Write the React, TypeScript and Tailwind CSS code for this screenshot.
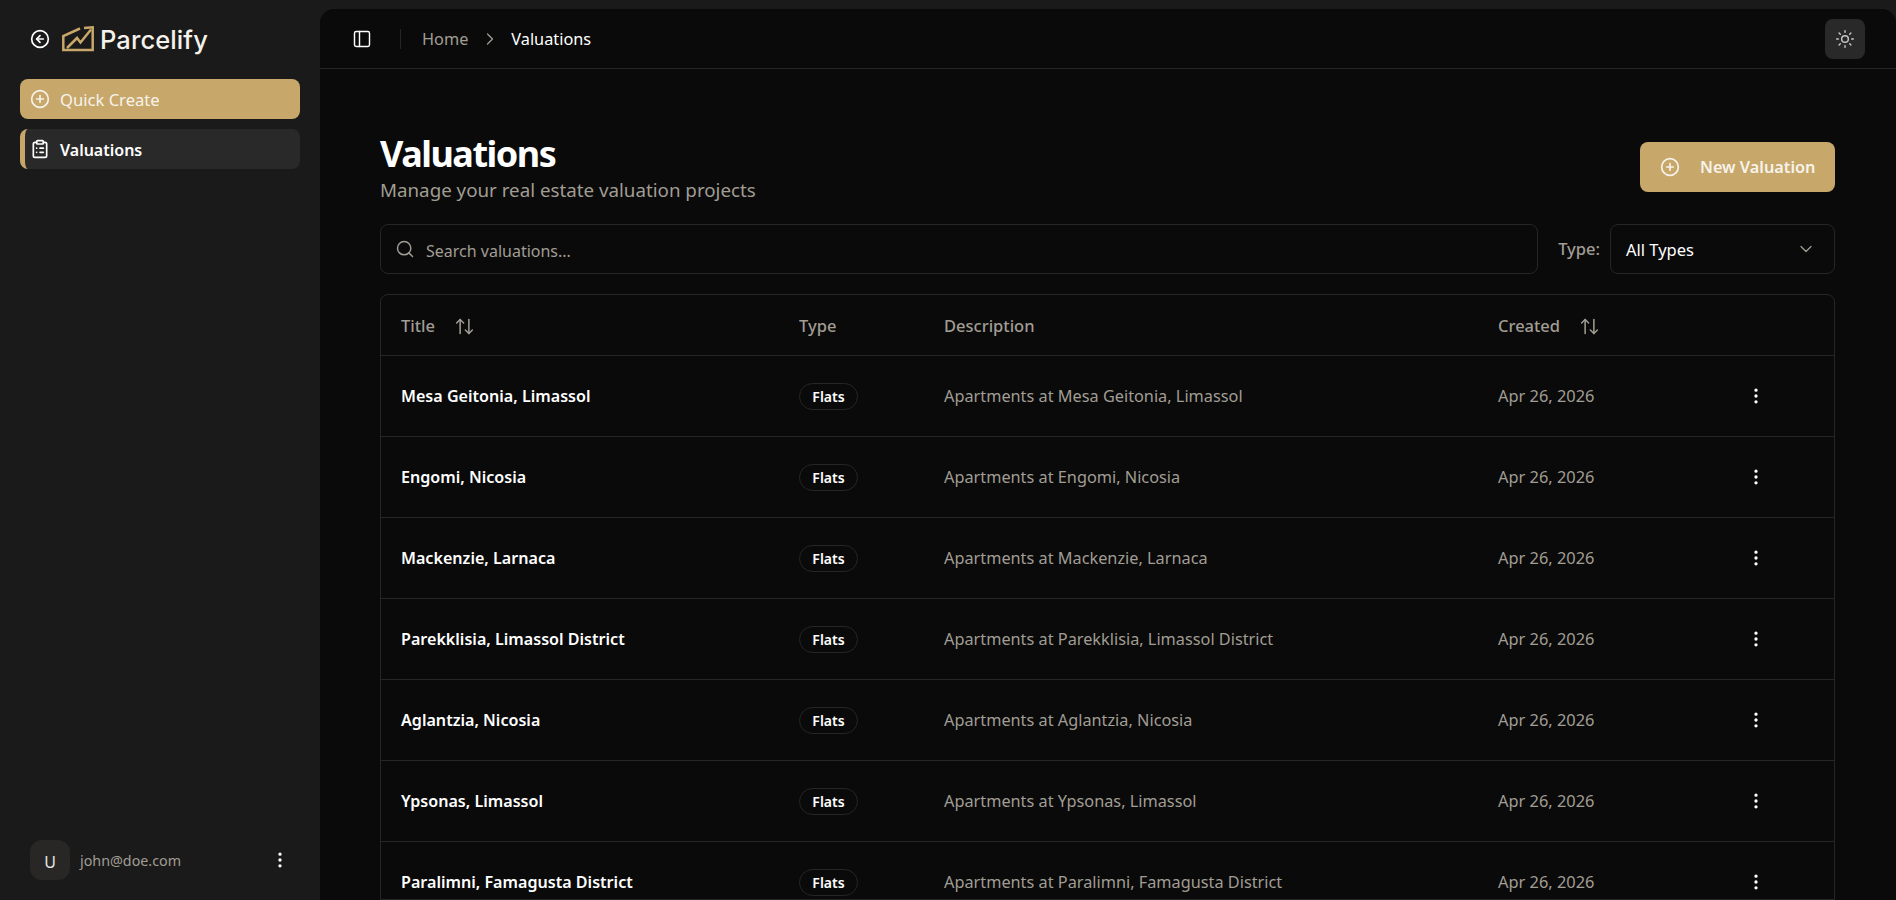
import React from 'react';
import { ArrowUpDown, ChevronDown, ChevronRight, CircleArrowLeft, CirclePlus, ClipboardList, EllipsisVertical, PanelLeft, Search, Sun } from 'lucide-react';

const rows = [
  'Mesa Geitonia, Limassol',
  'Engomi, Nicosia',
  'Mackenzie, Larnaca',
  'Parekklisia, Limassol District',
  'Aglantzia, Nicosia',
  'Ypsonas, Limassol',
  'Paralimni, Famagusta District',
];

const Logo = () => (
  <svg width="32" height="26" viewBox="0 0 32 26" fill="none" stroke="#c7a76a" strokeWidth="2.500">
    <path d="M18 2.500L1.300 10v14h29.400V10" />
    <path d="M5 22l10-10 3.500 4.500L29 3.500" />
    <path d="M22 2l8.700-.7V10" />
  </svg>
);

export default function App() {
  return (
    <div className="flex h-[900px] w-full overflow-hidden bg-[#1a1a1a] font-['Noto_Sans',sans-serif] text-white">
      {/* Sidebar */}
      <aside className="flex w-[320px] shrink-0 flex-col px-5 pb-5">
        <div className="flex h-[79px] items-center gap-[12px] pl-[10px] pb-[1px]">
          <CircleArrowLeft className="h-5 w-5" />
          <div className="flex items-center gap-[6px]">
            <Logo />
            <span className="pt-[3px] font-['Inter',sans-serif] text-[25.500px] font-medium tracking-[0.1px] text-[#f5f2ec]">Parcelify</span>
          </div>
        </div>
        <button className="flex h-10 items-center gap-[10px] rounded-lg bg-[#c7a76a] pl-[10px] text-[16.600px] text-[#f7f3ea]">
          <CirclePlus className="h-5 w-5" />
          <span className="pt-[2px]">Quick Create</span>
        </button>
        <div className="mt-2.5 flex h-10 items-center gap-[10px] rounded-lg border-l-[5px] border-[#c7a76a] bg-[#292929] pl-[5px] text-[16px] font-semibold">
          <ClipboardList className="h-5 w-5" />
          <span className="pt-[2px]">Valuations</span>
        </div>
        <div className="mt-auto flex items-center pl-2.5 pr-[10px] pt-2">
          <div className="flex h-10 w-10 items-center justify-center rounded-xl bg-[#292725] pt-[3px] text-[16px] text-[#e5e5e5]">U</div>
          <span className="ml-[10px] pt-[1px] text-[14.300px] text-[#a19d94]">john@doe.com</span>
          <EllipsisVertical className="ml-auto h-5 w-5" />
        </div>
      </aside>

      {/* Main */}
      <main className="mt-[9px] flex min-w-0 flex-1 flex-col overflow-hidden rounded-t-[14px] bg-[#0a0a0a]">
        <header className="flex h-[60px] shrink-0 items-center border-b border-[#262626] pl-[32px] pr-[31px]">
          <PanelLeft className="h-5 w-5" strokeWidth={1.75} />
          <div className="ml-[28px] h-5 w-px bg-[#262626]" />
          <span className="ml-[21px] pt-[1px] text-[16.300px] text-[#a19d94]">Home</span>
          <ChevronRight className="ml-[12px] h-5 w-5 text-[#a19d94]" strokeWidth={1.5} />
          <span className="ml-[11px] pt-[1px] text-[16.300px]">Valuations</span>
          <button className="ml-auto flex h-10 w-10 items-center justify-center rounded-lg bg-[#292929]">
            <Sun className="h-5 w-5 text-[#c4c4c4]" strokeWidth={1.75} />
          </button>
        </header>

        <div className="flex min-h-0 flex-1 flex-col pl-[60px] pr-[61px]">
          <div className="mt-16 flex items-start justify-between">
            <div>
              <h1 className="text-[36px] leading-[42px] font-bold tracking-[-1.500px]">Valuations</h1>
              <p className="pt-[2px] text-[18.750px] leading-[25px] text-[#a19d94]">Manage your real estate valuation projects</p>
            </div>
            <button className="mt-[9px] flex h-[50px] w-[195px] items-center rounded-lg bg-[#c7a76a] pl-5 text-[16.300px] font-semibold text-[#f7f3ea]">
              <CirclePlus className="h-5 w-5" />
              <span className="ml-5">New Valuation</span>
            </button>
          </div>

          <div className="mt-[22px] flex items-center">
            <div className="flex h-[50px] flex-1 items-center rounded-lg border border-[#262626] pl-[14px] text-[#a19d94]">
              <Search className="h-5 w-5" strokeWidth={1.75} />
              <span className="ml-[11px] pt-[3px] text-[16px]">Search valuations...</span>
            </div>
            <span className="ml-5 pt-[1px] text-[16.500px] font-medium text-[#a19d94]">Type:</span>
            <div className="ml-[10px] flex h-[50px] w-[225px] items-center justify-between rounded-lg border border-[#262626] pl-[15px] pr-[18px] text-[16.500px]">
              <span className="pt-[2px]">All Types</span>
              <ChevronDown className="h-5 w-5 text-[#a19d94]" strokeWidth={1.5} />
            </div>
          </div>

          <div className="mt-5 overflow-hidden rounded-t-lg border border-[#262626]">
            <table className="w-full table-fixed border-collapse">
              <colgroup>
                <col className="w-[398px]" />
                <col className="w-[145px]" />
                <col className="w-[554px]" />
                <col />
              </colgroup>
              <thead>
                <tr className="h-[60px] border-b border-[#262626] text-left text-[16.500px] text-[#a19d94]">
                  <th className="pl-5 pt-[3px] font-medium">
                    <span className="flex items-center gap-[19px]">Title <ArrowUpDown className="h-[21px] w-[21px]" strokeWidth={1.75} /></span>
                  </th>
                  <th className="pl-5 pt-[3px] font-medium">Type</th>
                  <th className="pl-5 pt-[3px] font-medium">Description</th>
                  <th className="pl-5 pt-[3px] font-medium">
                    <span className="flex items-center gap-[19px]">Created <ArrowUpDown className="h-[21px] w-[21px]" strokeWidth={1.75} /></span>
                  </th>
                </tr>
              </thead>
              <tbody>
                {rows.map((title) => (
                  <tr key={title} className="h-[81px] border-b border-[#262626]">
                    <td className="pl-5 pt-[2px] text-[16.100px] font-semibold">{title}</td>
                    <td className="pl-5 pt-[2px]">
                      <span className="inline-flex h-[27px] w-[59px] items-center justify-center rounded-full border border-[#262626] text-[14px] font-semibold">Flats</span>
                    </td>
                    <td className="pl-5 pt-[2px] text-[16.300px] text-[#a19d94]">Apartments at {title}</td>
                    <td className="pl-5 pt-[2px]">
                      <div className="flex items-center justify-between pr-[68px] text-[16.400px] text-[#a19d94]">
                        Apr 26, 2026
                        <EllipsisVertical className="h-5 w-5 text-white" />
                      </div>
                    </td>
                  </tr>
                ))}
              </tbody>
            </table>
          </div>
        </div>
      </main>
    </div>
  );
}
